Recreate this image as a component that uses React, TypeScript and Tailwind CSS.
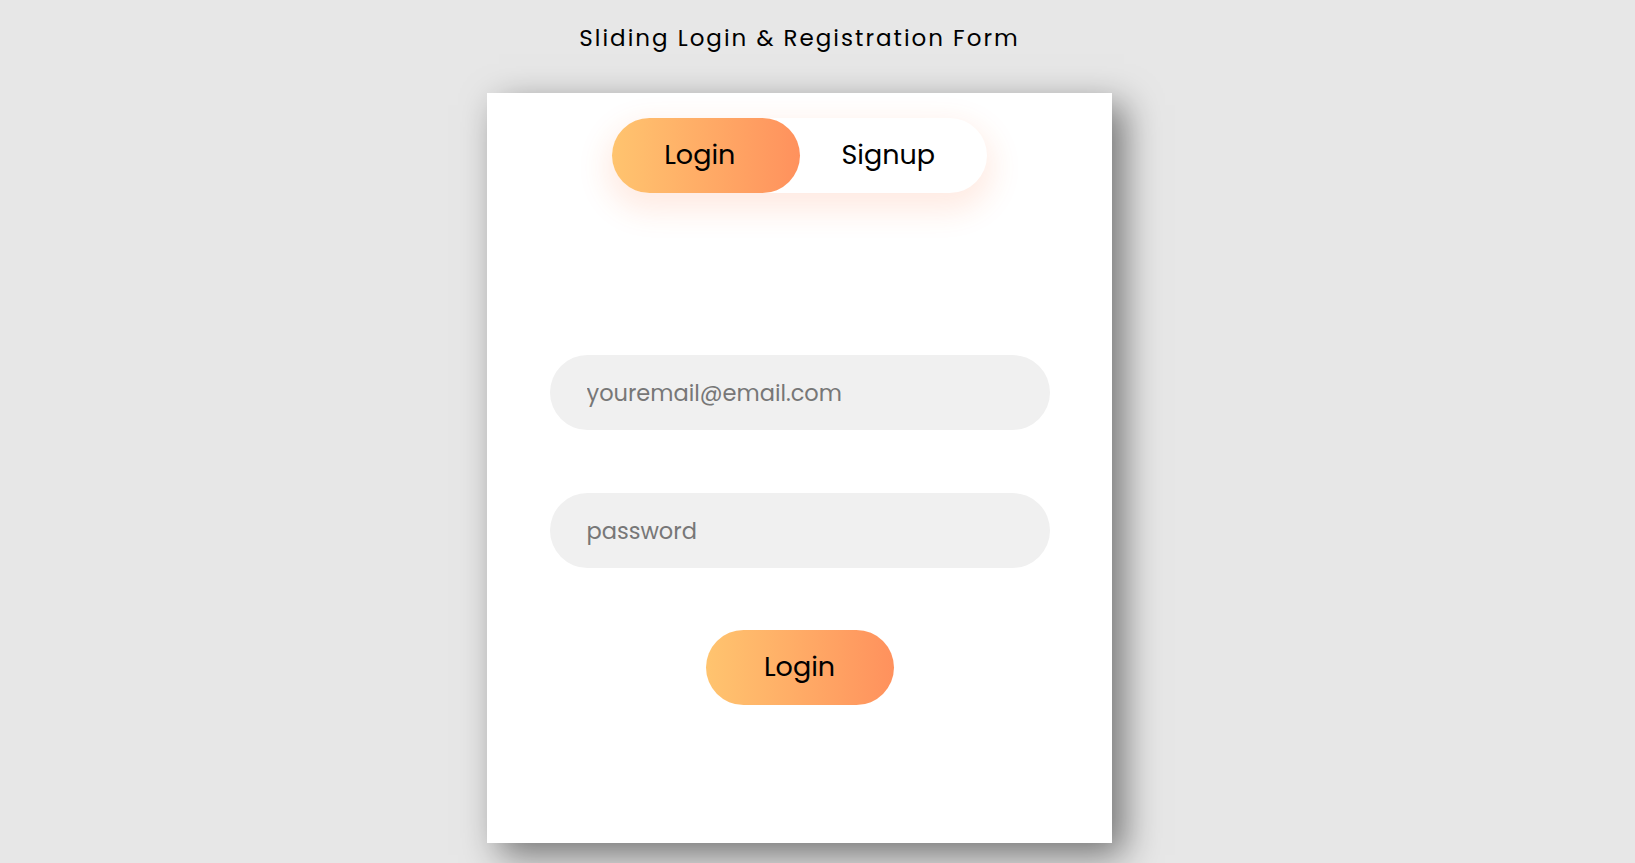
import React from "react";

export default function App() {
  const font = { fontFamily: "Poppins, Inter, 'Open Sans', sans-serif" };
  return (
    <div
      className="min-h-[863px] w-full bg-[#e7e7e7] flex flex-col items-center pr-[36px] overflow-hidden"
      style={font}
    >
      <h1 className="mt-[23px] h-[30px] leading-[30px] text-[23px] font-normal tracking-[2px] text-black">
        Sliding Login &amp; Registration Form
      </h1>
      <div className="mt-[40px] w-[625px] h-[750px] bg-white shadow-[12px_12px_34px_rgba(0,0,0,0.5)] flex flex-col items-center">
        <div className="mt-[25px] w-[375px] h-[75px] rounded-full bg-white shadow-[0_12px_30px_6px_rgba(255,97,36,0.13)] flex">
          <button className="w-1/2 h-full rounded-full bg-gradient-to-r from-[#ffc46f] to-[#ff915d] pr-[12px] text-[27px] text-black">
            Login
          </button>
          <button className="w-1/2 h-full rounded-full pr-[10px] text-[27px] text-black">
            Signup
          </button>
        </div>
        <input
          className="mt-[162px] w-[500px] h-[75px] rounded-full bg-[#f0f0f0] pl-[37px] text-[22.5px] outline-none placeholder:text-[#777]"
          placeholder="youremail@email.com"
        />
        <input
          type="password"
          className="mt-[63px] w-[500px] h-[75px] rounded-full bg-[#f0f0f0] pl-[37px] text-[22.5px] outline-none placeholder:text-[#777]"
          placeholder="password"
        />
        <button className="mt-[62px] w-[188px] h-[75px] rounded-full bg-gradient-to-r from-[#ffc46f] to-[#ff915d] text-[27px] text-black">
          Login
        </button>
      </div>
    </div>
  );
}
